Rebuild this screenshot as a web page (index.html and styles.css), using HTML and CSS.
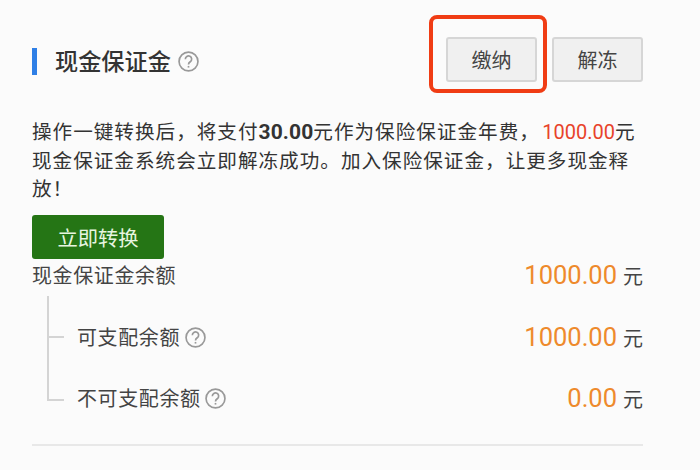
FILE: index.html
```html
<!DOCTYPE html>
<html lang="zh-CN">
<head>
    <meta charset="UTF-8">
    <meta name="viewport" content="width=device-width, initial-scale=1.0">
    <title>现金保证金</title>
    <link rel="stylesheet" href="styles.css">
</head>
<body>
    <div class="container">
        <div class="header">
            <div class="title">
                <span class="title-text">现金保证金</span>
                <svg class="help help-title" viewBox="0 0 20 20"><circle cx="10" cy="10" r="9"/><path d="M7 7.8a3 3 0 1 1 4.7 2.4c-1.1.8-1.7 1.2-1.7 2.6"/><path d="M10 14.2v1.6"/></svg>
            </div>
            <div class="actions">
                <div class="highlight">
                    <button class="btn">缴纳</button>
                </div>
                <button class="btn">解冻</button>
            </div>
        </div>
        <p class="notice">操作一键转换后，将支付<b>30.00</b>元作为保险保证金年费，<span class="red">1000.00</span>元<br>现金保证金系统会立即解冻成功。加入保险保证金，让更多现金释放！</p>
        <button class="convert-btn">立即转换</button>
        <div class="row row-total">
            <span class="label">现金保证金余额</span>
            <span class="value"><span class="amount">1000.00</span> 元</span>
        </div>
        <div class="tree">
            <div class="row row-sub">
                <span class="label">可支配余额
                    <svg class="help" viewBox="0 0 20 20"><circle cx="10" cy="10" r="9"/><path d="M7 7.8a3 3 0 1 1 4.7 2.4c-1.1.8-1.7 1.2-1.7 2.6"/><path d="M10 14.2v1.6"/></svg>
                </span>
                <span class="value"><span class="amount">1000.00</span> 元</span>
            </div>
            <div class="row row-sub">
                <span class="label">不可支配余额
                    <svg class="help" viewBox="0 0 20 20"><circle cx="10" cy="10" r="9"/><path d="M7 7.8a3 3 0 1 1 4.7 2.4c-1.1.8-1.7 1.2-1.7 2.6"/><path d="M10 14.2v1.6"/></svg>
                </span>
                <span class="value"><span class="amount">0.00</span> 元</span>
            </div>
        </div>
    </div>
</body>
</html>
```

FILE: styles.css
```css
body {
    font-family: 'Roboto', 'Noto Sans CJK SC', sans-serif;
    margin: 0;
    background-color: #fbfbfb;
    color: #444;
    height: 470px;
    overflow: hidden;
}
.container {
    width: 611px;
    height: 446px;
    box-sizing: border-box;
    margin-left: 32px;
    border-bottom: 2px solid #e8e8e8;
}
.header {
    display: flex;
    justify-content: space-between;
    align-items: flex-start;
    height: 118px;
}
.title {
    display: flex;
    align-items: center;
    margin-top: 48px;
    height: 27px;
    border-left: 5px solid #2f7fe6;
    padding-left: 18px;
}
.title-text {
    padding-top: 2px;
    font-size: 23.2px;
    font-weight: 500;
    color: #333;
    line-height: 27px;
}
.help {
    width: 21px;
    height: 21px;
    margin-left: -1px;
    fill: none;
    stroke: #999;
    stroke-width: 1.6;
    vertical-align: -3px;
}
.help-title {
    margin-left: 7px;
}
.actions {
    display: flex;
    gap: 15px;
    margin-top: 37px;
}
.highlight {
    position: relative;
}
.highlight::after {
    content: "";
    position: absolute;
    left: -17px;
    top: -22px;
    right: -10px;
    bottom: -11px;
    border: 4px solid #f03c14;
    border-radius: 8px;
}
.btn {
    display: block;
    width: 91px;
    height: 45px;
    background-color: #f0f0f0;
    border: 2px solid #d6d6d6;
    border-radius: 3px;
    font-family: inherit;
    font-size: 20px;
    color: #444;
    padding: 0;
}
.notice {
    margin: 0;
    font-size: 19.6px;
    letter-spacing: 1px;
    line-height: 28.5px;
    color: #333;
    height: 87px;
}
.notice b {
    font-size: 21px;
    font-weight: 700;
    letter-spacing: 0.1px;
}
.red {
    margin-left: 2.5px;
    font-size: 20px;
    color: #e8432a;
    letter-spacing: 0;
}
.convert-btn {
    display: block;
    width: 132px;
    height: 44px;
    margin-top: 10px;
    background-color: #257515;
    border: none;
    border-radius: 3px;
    color: #e8f5e0;
    font-family: inherit;
    font-size: 20.3px;
    padding: 0;
}
.row {
    display: flex;
    justify-content: space-between;
    align-items: center;
}
.row-total {
    height: 31px;
}
.label {
    font-size: 20px;
    letter-spacing: 0.6px;
    color: #444;
}
.value {
    font-size: 20px;
    color: #444;
}
.amount {
    margin-right: 1px;
    font-size: 25.5px;
    color: #ee8a2c;
}
.tree {
    position: relative;
    padding-left: 45px;
    padding-top: 16px;
}
.row-sub {
    height: 61px;
}
.tree::before {
    content: "";
    position: absolute;
    left: 15px;
    top: 6px;
    width: 17px;
    height: 105px;
    border-left: 2px solid #d4d4d4;
    border-bottom: 2px solid #d4d4d4;
    box-sizing: border-box;
}
.tree::after {
    content: "";
    position: absolute;
    left: 15px;
    top: 46px;
    width: 17px;
    border-top: 2px solid #d4d4d4;
}
```
